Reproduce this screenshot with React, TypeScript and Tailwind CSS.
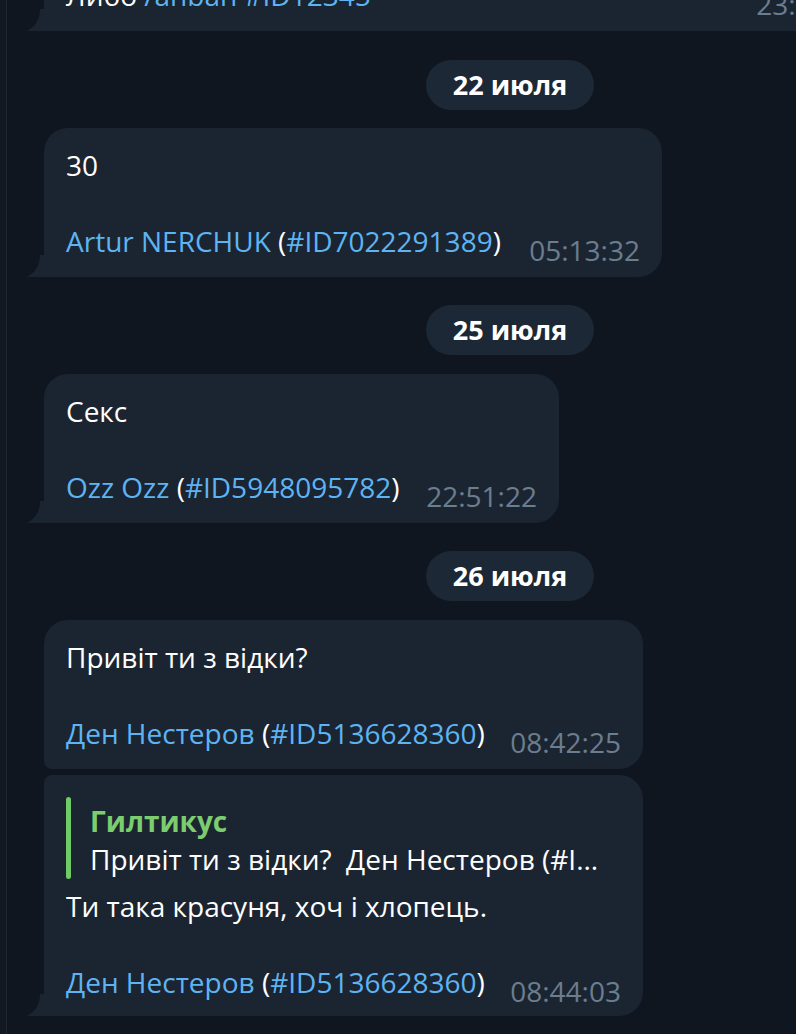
import React from "react";

const font = { fontFamily: '"Open Sans", "Noto Sans", sans-serif' };

function Tail() {
  return (
    <svg
      className="absolute bottom-0 left-[-17px]"
      width="18"
      height="22"
      viewBox="0 0 18 22"
    >
      <path d="M18 0 L18 22 L0 22 C8 18 13 10 13 0 Z" fill="#1b2532" />
    </svg>
  );
}

function Name({ name, id }: { name: string; id: string }) {
  return (
    <span className="whitespace-nowrap">
      <span className="text-[#5eb4f3]">{name} </span>
      <span className="text-white">(</span>
      <span className="text-[#5eb4f3]">{id}</span>
      <span className="text-white">)</span>
    </span>
  );
}

function Footer({ name, id, time }: { name: string; id: string; time: string }) {
  return (
    <div className="flex items-end justify-between">
      <Name name={name} id={id} />
      <span className="ml-[20px] translate-y-[9px] whitespace-nowrap text-[#6b7d8e]">{time}</span>
    </div>
  );
}

function Pill({ children }: { children: React.ReactNode }) {
  return (
    <div className="flex justify-end pr-[202px]">
      <div className="flex h-[50px] w-[168px] items-center justify-center rounded-full bg-[#1d2836] text-[27px] font-bold text-white">
        {children}
      </div>
    </div>
  );
}

export default function App() {
  return (
    <div
      className="flex h-[1034px] w-[796px] overflow-hidden bg-[#0f1620] text-[28px] leading-[38px] text-white"
      style={font}
    >
      <div className="w-[7px] shrink-0 border-r border-[#1d2631] bg-[#111822]" />
      <div className="flex min-w-0 flex-1 flex-col">
        {/* top partially visible bubble */}
        <div className="relative ml-[37px] mt-[-118px] h-[149px] w-[845px] shrink-0 rounded-tl-[24px] bg-[#1b2532] px-[22px] pb-[17px] pt-[18px]">
          <div className="h-[76px]" />
          <div className="flex justify-between">
            <span className="whitespace-nowrap">
              Либо <span className="text-[#5eb4f3]">/anban #ID12345</span>
            </span>
            <span className="translate-y-[9px] text-[#6b7d8e]">23:59:10</span>
          </div>
          <Tail />
        </div>

        <div className="mt-[29px]">
          <Pill>22 июля</Pill>
        </div>

        <div className="relative ml-[37px] mt-[18px] w-[618px] rounded-[24px] rounded-bl-none bg-[#1b2532] px-[22px] pb-[17px] pt-[18px]">
          <div>30</div>
          <div className="h-[38px]" />
          <Footer name="Artur NERCHUK" id="#ID7022291389" time="05:13:32" />
          <Tail />
        </div>

        <div className="mt-[28px]">
          <Pill>25 июля</Pill>
        </div>

        <div className="relative ml-[37px] mt-[19px] w-[515px] rounded-[24px] rounded-bl-none bg-[#1b2532] px-[22px] pb-[17px] pt-[18px]">
          <div>Секс</div>
          <div className="h-[38px]" />
          <Footer name="Ozz Ozz" id="#ID5948095782" time="22:51:22" />
          <Tail />
        </div>

        <div className="mt-[28px]">
          <Pill>26 июля</Pill>
        </div>

        <div className="relative ml-[37px] mt-[19px] w-[599px] rounded-[24px] rounded-bl-[8px] bg-[#1b2532] px-[22px] pb-[17px] pt-[18px]">
          <div>Привіт ти з відки?</div>
          <div className="h-[38px]" />
          <Footer name="Ден Нестеров" id="#ID5136628360" time="08:42:25" />
        </div>

        <div className="relative ml-[37px] mt-[6px] w-[599px] rounded-[24px] rounded-bl-none rounded-tl-[8px] bg-[#1b2532] px-[22px] pb-[15px] pt-[22px]">
          <div className="flex h-[82px]">
            <div className="w-[5px] rounded-full bg-[#6fcb63]" />
            <div className="pl-[19px] pt-[5px]">
              <div className="font-bold text-[#7ccd6e]">Гилтикус</div>
              <div className="whitespace-pre">Привіт ти з відки?  Ден Нестеров (#I...</div>
            </div>
          </div>
          <div className="mt-[8px]">Ти така красуня, хоч і хлопець.</div>
          <div className="h-[38px]" />
          <Footer name="Ден Нестеров" id="#ID5136628360" time="08:44:03" />
          <Tail />
        </div>
      </div>
    </div>
  );
}
